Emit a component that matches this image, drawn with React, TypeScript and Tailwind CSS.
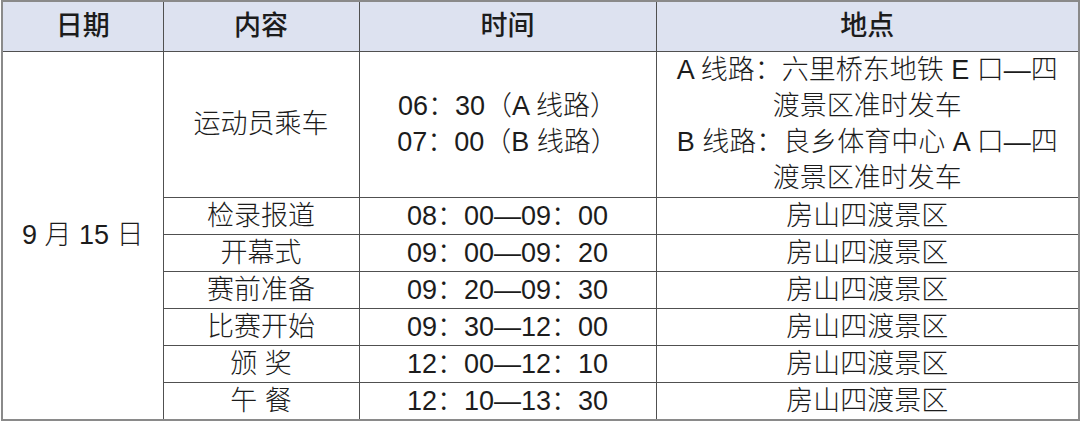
import React from "react";

const font = {
  fontFamily: '"Liberation Sans", "Noto Sans CJK SC", sans-serif',
};

const rows = [
  { item: "检录报道", time: "08：00—09：00" },
  { item: "开幕式", time: "09：00—09：20" },
  { item: "赛前准备", time: "09：20—09：30" },
  { item: "比赛开始", time: "09：30—12：00" },
  { item: "颁 奖", time: "12：00—12：10" },
  { item: "午 餐", time: "12：10—13：30" },
];

const cell = "border border-[#505050] text-center align-middle p-0";

export default function App() {
  return (
    <div className="w-[1080px] h-[422px] bg-white pl-px" style={font}>
      <table className="border-collapse table-fixed w-[1077px] border-2 border-[#8a8a8a] text-[27px] leading-[36px] text-[#1c1c1c] font-light">
        <colgroup>
          <col className="w-[161px]" />
          <col className="w-[196px]" />
          <col className="w-[297px]" />
          <col className="w-[423px]" />
        </colgroup>
        <thead>
          <tr className="h-[50px] bg-[#dde2f0]">
            <th className={`${cell} font-medium`}>日期</th>
            <th className={`${cell} font-medium`}>内容</th>
            <th className={`${cell} font-medium`}>时间</th>
            <th className={`${cell} font-medium`}>地点</th>
          </tr>
        </thead>
        <tbody>
          <tr className="h-[146px]">
            <td className={cell} rowSpan={7}>
              9 月 15 日
            </td>
            <td className={cell}>运动员乘车</td>
            <td className={cell}>
              <div>06：30（A 线路）</div>
              <div>07：00（B 线路）</div>
            </td>
            <td className={cell}>
              <div>A 线路：六里桥东地铁 E 口—四</div>
              <div>渡景区准时发车</div>
              <div>B 线路：良乡体育中心 A 口—四</div>
              <div>渡景区准时发车</div>
            </td>
          </tr>
          {rows.map((r) => (
            <tr key={r.item} className="h-[37px]">
              <td className={cell}>{r.item}</td>
              <td className={cell}>{r.time}</td>
              <td className={cell}>房山四渡景区</td>
            </tr>
          ))}
        </tbody>
      </table>
    </div>
  );
}
